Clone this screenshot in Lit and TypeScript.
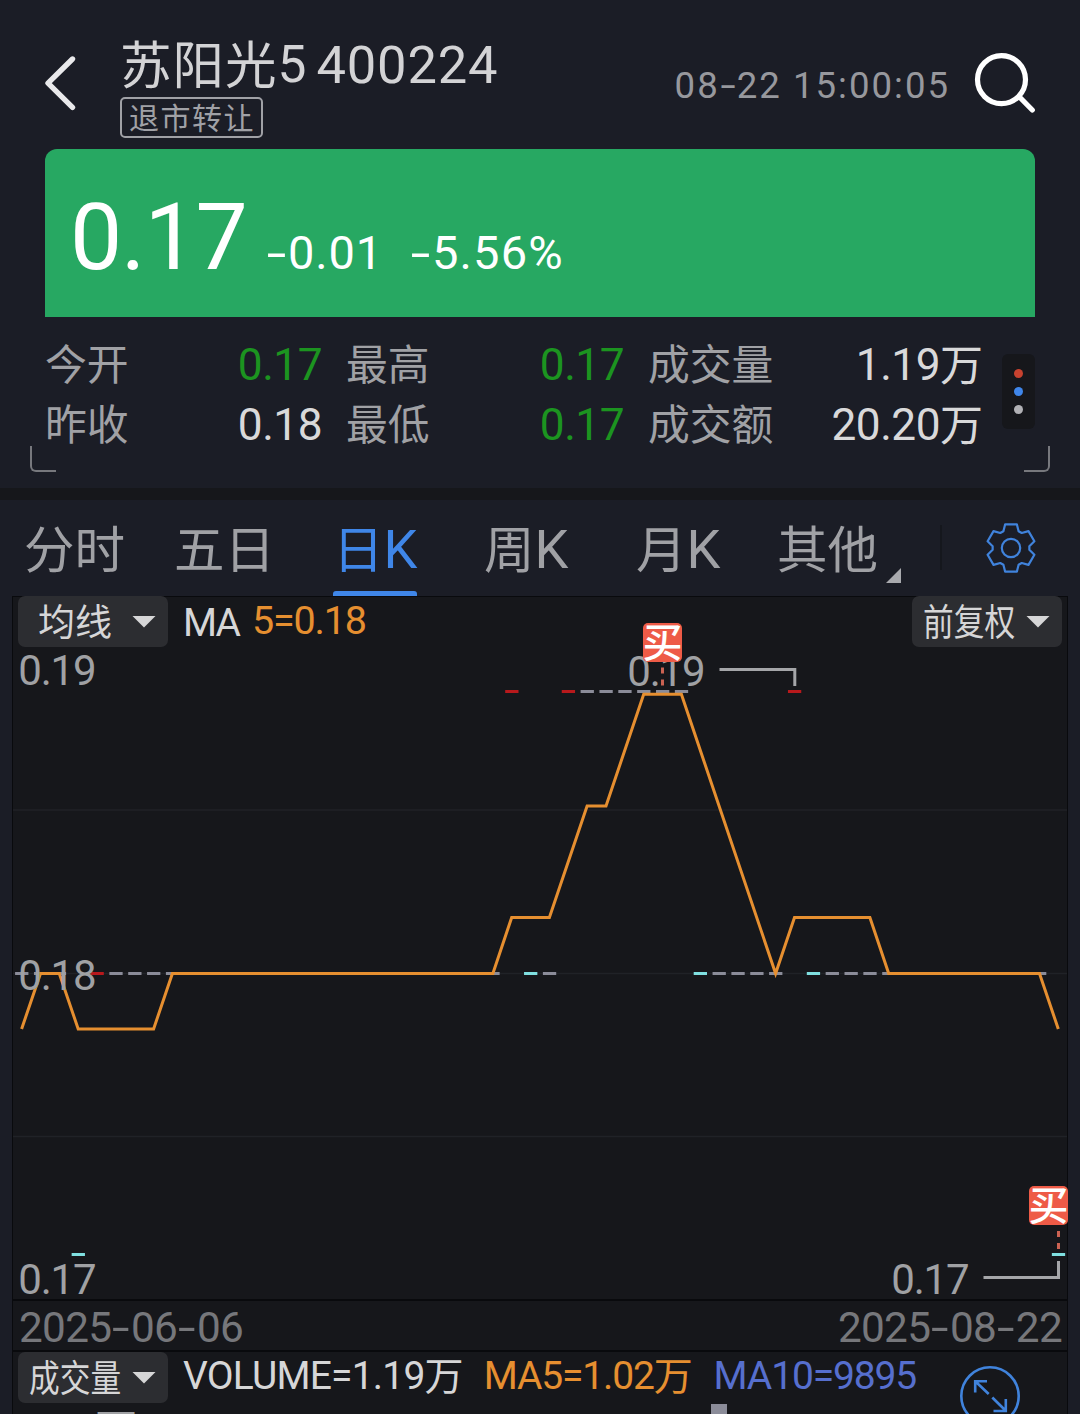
import { LitElement, html, svg, css } from "lit";
import { customElement } from "lit/decorators.js";
import { classMap } from "lit/directives/class-map.js";

type Tone = "up" | "flat" | "down";

interface Stat {
  label: string;
  value: string;
  green?: boolean;
}

const STATS: Stat[] = [
  { label: "今开", value: "0.17", green: true },
  { label: "最高", value: "0.17", green: true },
  { label: "成交量", value: "1.19万" },
  { label: "昨收", value: "0.18" },
  { label: "最低", value: "0.17", green: true },
  { label: "成交额", value: "20.20万" },
];

const TABS = ["分时", "五日", "日K", "周K", "月K", "其他"];

// Chart geometry: one trading day per step.
const STEP = 18.85;
const dayX = (i: number) => 21.6 + STEP * i;

const Y19 = 691.5;
const Y18 = 973.5;
const Y17 = 1254.5;

// Average line as [day, y].
const MA5: [number, number][] = [
  [0, 1029], [1, 973.5], [2, 973.5], [3, 1029], [7, 1029], [8, 973.5],
  [25, 973.5], [26, 917.5], [28, 917.5], [30, 806], [31, 806], [33, 694.3],
  [35, 694.3], [40, 973.5], [41, 917.5], [45, 917.5], [46, 973.5],
  [54, 973.5], [55, 1029],
];

const range = (a: number, b: number) => Array.from({ length: b - a + 1 }, (_, k) => a + k);

const CANDLES: { day: number; y: number; tone: Tone }[] = [
  ...[...range(0, 2), ...range(5, 25), 28, ...range(37, 40), ...range(43, 54)].map((day) => ({
    day, y: Y18, tone: "flat" as Tone,
  })),
  ...range(30, 35).map((day) => ({ day, y: Y19, tone: "flat" as Tone })),
  ...[26, 29, 41].map((day) => ({ day, y: Y19, tone: "up" as Tone })),
  { day: 4, y: Y18, tone: "up" },
  ...[27, 36, 42].map((day) => ({ day, y: Y18, tone: "down" as Tone })),
  ...[3, 55].map((day) => ({ day, y: Y17, tone: "down" as Tone })),
];

// Six-toothed gear outline around the origin.
const gearPath = (() => {
  const tooth = [[-7.6, -16.8], [-5.9, -23.6], [5.9, -23.6], [7.6, -16.8]];
  const pts: string[] = [];
  for (let k = 0; k < 6; k++) {
    const a = (k * Math.PI) / 3;
    for (const [x, y] of tooth) {
      pts.push(
        `${(x * Math.cos(a) - y * Math.sin(a)).toFixed(2)} ${(x * Math.sin(a) + y * Math.cos(a)).toFixed(2)}`
      );
    }
  }
  return `M${pts.join("L")}Z`;
})();

const FONT = css`Roboto, "Noto Sans CJK SC", sans-serif`;

// Figures use a wide hyphen; it is stretched in its own span.
const hyphenStyles = css`
  .hy { display: inline-block; transform: scaleX(1.5); margin: 0 0.095em; letter-spacing: 0; }
`;
const figures = (text: string) =>
  text.split(/(-)/).map((p) => (p === "-" ? html`<span class="hy">-</span>` : p));

@customElement("quote-header")
export class QuoteHeader extends LitElement {
  static styles = [
    hyphenStyles,
    css`
    :host { display: block; font-family: ${FONT}; }
    .bar { height: 149px; display: flex; align-items: flex-start; box-sizing: border-box; padding: 0 44px 0 44px; }
    .back { width: 34px; height: 60px; margin-top: 53px; flex: none; }
    .name { margin: 38px 0 0 42px; display: flex; flex-direction: column; align-items: flex-start; }
    .title { display: flex; gap: 9px; height: 54px; line-height: 54px; color: #d3d3d5; white-space: nowrap; font-size: 52.5px; }
    .cn { font-size: 51.5px; letter-spacing: 1px; }
    .han { vertical-align: -1.5px; line-height: 0; }
    .code { letter-spacing: 0.8px; }
    .tag { margin-top: 5px; height: 41px; width: 143px; box-sizing: border-box; border: 2px solid #a0a1a6; border-radius: 5px; color: #a0a1a6; font-size: 30px; letter-spacing: 1.5px; line-height: 39px; padding-left: 7px; white-space: nowrap; }
    .time { margin: 66px 24px 0 auto; height: 40px; line-height: 40px; font-size: 36.6px; letter-spacing: 2px; color: #97989d; white-space: nowrap; }
    .search { width: 64px; height: 64px; margin: 51px -2px 0 0; flex: none; }
    .banner { margin: 0 45px; height: 168px; box-sizing: border-box; border-radius: 12px 12px 0 0; background: #27a862; color: #fff; display: flex; align-items: baseline; padding: 39px 0 0 25px; white-space: nowrap; }
    .price { font-size: 93px; line-height: 100px; letter-spacing: -1.2px; width: 176px; }
    .delta { font-size: 47px; line-height: 100px; margin-left: 20px; letter-spacing: 0.9px; width: 115px; }
    .pct { margin-left: 29px; letter-spacing: 1.2px; }
  `,
  ];
  render() {
    return html`
      <div class="bar">
        <svg class="back" viewBox="44 53 34 60" fill="none" stroke="#e9e9eb" stroke-width="5.4" stroke-linecap="round" stroke-linejoin="round">
          <path d="M72.5 59 48 83.2 72.5 107.3" />
        </svg>
        <div class="name">
          <div class="title"><span class="cn"><span class="han">苏阳光</span>5</span><span class="code">400224</span></div>
          <div class="tag">退市转让</div>
        </div>
        <div class="time">${figures("08-22 15:00:05")}</div>
        <svg class="search" viewBox="974 51 64 64" fill="none" stroke="#fff" stroke-width="5.2" stroke-linecap="round">
          <circle cx="1001.5" cy="79.6" r="24" />
          <path d="M1019.5 97 1032.3 110" />
        </svg>
      </div>
      <div class="banner">
        <span class="price">0.17</span>
        <span class="delta">${figures("-0.01")}</span>
        <span class="delta pct">${figures("-5.56%")}</span>
      </div>
    `;
  }
}

@customElement("quote-stats")
export class QuoteStats extends LitElement {
  static styles = css`
    :host { display: block; font-family: ${FONT}; height: 171px; position: relative; }
    .row { display: flex; padding: 18px 45px 0 45px; }
    .grid { display: grid; grid-template-columns: 277px 279px 335px; column-gap: 23px; grid-auto-rows: 60px; flex: none; }
    .cell { display: flex; justify-content: space-between; line-height: 60px; white-space: nowrap; }
    .label { font-size: 41.8px; color: #a0a1a5; padding: 1px 0 0 0; }
    .value { font-size: 44.2px; letter-spacing: -0.5px; color: #d9d9da; }
    .green { color: #1c9420; }
    .wan { font-size: 43px; vertical-align: -1px; line-height: 0; letter-spacing: -1px; }
    .cell:nth-child(3n + 2) .label, .cell:nth-child(3n) .label { padding-left: 1px; }
    .dots { margin: 19px 0 0 auto; width: 33px; height: 75px; box-sizing: border-box; border-radius: 6px; background: #16171b; display: flex; flex-direction: column; align-items: center; justify-content: center; gap: 9px; flex: none; }
    .dot { width: 9px; height: 9px; border-radius: 50%; }
    .red { background: #c7422f; }
    .blue { background: #3f86ea; }
    .grey { background: #b1b1b5; }
    .corner { position: absolute; top: 129px; width: 24px; height: 24px; border-bottom: 2px solid #77787d; }
    .left { left: 30px; border-left: 2px solid #77787d; border-bottom-left-radius: 6px; }
    .right { right: 30px; border-right: 2px solid #77787d; border-bottom-right-radius: 6px; }
  `;
  render() {
    return html`
      <div class="row">
        <div class="grid">
          ${STATS.map(
            (s) => html`<div class="cell">
              <span class="label">${s.label}</span>
              <span class=${classMap({ value: true, green: !!s.green })}>${s.value.replace("万", "")}${
                s.value.endsWith("万") ? html`<span class="wan">万</span>` : ""
              }</span>
            </div>`
          )}
        </div>
        <div class="dots">
          <span class="dot red"></span><span class="dot blue"></span><span class="dot grey"></span>
        </div>
      </div>
      <span class="corner left"></span><span class="corner right"></span>
    `;
  }
}

@customElement("period-tabs")
export class PeriodTabs extends LitElement {
  static styles = css`
    :host { display: block; font-family: ${FONT}; border-top: 12px solid #16171b; }
    .tabs { height: 96px; display: grid; grid-template-columns: 150px 159px 151px 152px 141px 165px 1fr; padding-left: 24px; }
    .tab { display: flex; flex-direction: column; justify-content: space-between; align-items: flex-start; font-size: 50.5px; line-height: 101px; color: #a0a1a5; white-space: nowrap; position: relative; }
    .text { height: 90px; }
    .k { font-size: 54px; line-height: 0; vertical-align: 0.5px; }
    .active { color: #3f86e8; }
    .line { width: 84px; height: 5px; border-radius: 3px 3px 0 0; background: #3f86e8; }
    .more { position: absolute; left: 109px; top: 68px; width: 15px; height: 15px; background: #a9aaae; clip-path: polygon(100% 0, 100% 100%, 0 100%); }
    .settings { display: flex; align-items: flex-start; }
    .rule { width: 2px; height: 45px; margin: 25px 43px 0 -2px; background: #15171d; }
    .gear { width: 52px; height: 52px; margin-top: 22px; }
  `;
  render() {
    return html`
      <div class="tabs">
        ${TABS.map(
          (t) => html`<div class=${classMap({ tab: true, active: t === "日K" })}>
            <span class="text">${t.replace("K", "")}${t.endsWith("K") ? html`<span class="k">K</span>` : ""}</span>
            ${t === "日K" ? html`<span class="line"></span>` : ""}
            ${t === "其他" ? html`<span class="more"></span>` : ""}
          </div>`
        )}
        <div class="settings">
          <span class="rule"></span>
          <svg class="gear" viewBox="-26 -26 52 52" fill="none" stroke="#4083dc" stroke-width="2.2" stroke-linejoin="round">
            <path d=${gearPath} />
            <circle r="9.2" />
          </svg>
        </div>
      </div>
    `;
  }
}

@customElement("k-chart")
export class KChart extends LitElement {
  static styles = [
    hyphenStyles,
    css`
    :host { display: block; font-family: ${FONT}; margin: 0 12px; background: #16171b; box-shadow: inset 1px 0 #090a0d, inset -1px 0 #090a0d, inset 0 1px #090a0d; }
    .stack { display: grid; height: 703px; }
    .plot { grid-area: 1 / 1; display: block; width: 1056px; height: 703px; font-family: inherit; overflow: visible; }
    .tools { grid-area: 1 / 1; display: flex; height: 51px; padding: 0 6px; white-space: nowrap; }
    .btn { width: 150px; height: 51px; box-sizing: border-box; border-radius: 7px; background: #2c2d31; color: #d6d6d7; display: flex; align-items: center; justify-content: space-between; padding: 0 12px 0 20px; font-size: 37px; line-height: 51px; letter-spacing: 0; flex: none; }
    .name { padding-top: 4px; }
    .tight { padding-left: 11px; }
    .narrow { display: block; width: 93px; padding-top: 4px; }
    .narrow > span { display: inline-block; transform: scaleX(0.83); transform-origin: 0 50%; }
    .caret { width: 24px; height: 12px; background: #d6d6d7; clip-path: polygon(0 0, 100% 0, 50% 100%); }
    .ma { margin-left: 15px; line-height: 54px; font-size: 39px; letter-spacing: -1.9px; color: #d6d6d7; }
    .ma5 { margin-left: 13px; line-height: 50px; font-size: 39.5px; letter-spacing: -1.2px; color: #e68f30; }
    .push { margin-left: auto; }
    .grid { stroke: #202227; stroke-width: 1.5; }
    .avg { fill: none; stroke: #e68f30; stroke-width: 3; }
    .up { fill: #b8191c; }
    .flat { fill: #8b8c99; }
    .down { fill: #7fdfe0; }
    .axis { fill: #a0a1a4; font-size: 42px; }
    .leader { fill: none; stroke: #a5a6a9; stroke-width: 3; }
    .stem { stroke: #cb6252; stroke-width: 3; stroke-dasharray: 6 6; }
    .badge { fill: #ee5b47; }
    .buy { fill: #fff; font-size: 40px; font-weight: 500; text-anchor: middle; font-family: "Noto Sans CJK SC", sans-serif; }
    .dates { border-top: 2px solid #090a0d; border-bottom: 2px solid #090a0d; box-sizing: border-box; height: 53px; display: flex; justify-content: space-between; padding: 0 6px 0 7px; font-size: 42.3px; letter-spacing: -0.7px; line-height: 54px; color: #76777b; }
    .volume { height: 62px; overflow: hidden; position: relative; }
    .vol { color: #d6d6d7; margin-left: 15px; letter-spacing: -0.8px; }
    .legend { font-size: 39px; line-height: 48px; letter-spacing: -1.15px; }
    .v5 { color: #e68f30; margin-left: 21px; }
    .v10 { color: #566fce; margin-left: 22px; }
    .wan { vertical-align: -1px; line-height: 0; }
    .scale { padding-left: 6px; font-size: 42px; line-height: 50px; letter-spacing: -1.2px; color: #a0a1a4; margin-top: 2px; }
    .column { position: absolute; left: 699px; top: 52px; width: 16px; height: 10px; background: #8b8c99; }
    .expand { position: absolute; left: 946px; top: 12px; width: 64px; height: 50px; }
  `,
  ];

  private badge(x: number, y: number, stemX: number, stemY: number) {
    return svg`
      <path class="stem" d="M${stemX} ${stemY}v19" />
      <rect class="badge" x=${x} y=${y} width="39" height="39" rx="5" />
      <text class="buy" x=${x + 19.5} y=${y + 34}>买</text>
    `;
  }

  private label(x: number, y: number, text: string) {
    return svg`<text class="axis" x=${x} y=${y} textLength="78.5">${text}</text>`;
  }

  render() {
    const line = MA5.map(([d, y]) => `${dayX(d).toFixed(1)},${y}`).join(" ");
    return html`
      <div class="stack">
        <svg class="plot" viewBox="12 596 1056 703">
          ${[810, 973.5, 1136.5].map((y) => svg`<path class="grid" d="M13 ${y}H1067" />`)}
          ${CANDLES.map(
            (c) => svg`<rect class=${c.tone} x=${dayX(c.day) - 6.5} y=${c.y - 1.5} width="13.3" height="3" />`
          )}
          <polyline class="avg" points=${line} />
          ${this.label(18.2, 685, "0.19")}
          ${this.label(18.2, 989.7, "0.18")}
          ${this.label(18.2, 1294, "0.17")}
          ${this.label(627.2, 686, "0.19")}
          ${this.label(891.2, 1294, "0.17")}
          <path class="leader" d="M719.5 669.5H794.8V686" />
          <path class="leader" d="M983.5 1277.5H1058.5V1261" />
          ${this.badge(643, 623, 662.5, 667.5)}
          ${this.badge(1029, 1186, 1058.5, 1231)}
        </svg>
        <div class="tools">
          <div class="btn"><span class="name">均线</span><span class="caret"></span></div>
          <span class="ma">MA</span><span class="ma5">5=0.18</span>
          <div class="btn tight push"><span class="narrow"><span>前复权</span></span><span class="caret"></span></div>
        </div>
      </div>
      <div class="dates"><span>${figures("2025-06-06")}</span><span>${figures("2025-08-22")}</span></div>
      <div class="volume">
        <div class="tools legend">
          <div class="btn tight"><span class="narrow"><span>成交量</span></span><span class="caret"></span></div>
          <span class="vol">VOLUME=1.19<span class="wan">万</span></span>
          <span class="v5">MA5=1.02<span class="wan">万</span></span>
          <span class="v10">MA10=9895</span>
        </div>
        <div class="scale">0.14万</div>
        <span class="column"></span>
        <svg class="expand" viewBox="958 1364 64 50" fill="none" stroke="#4083dc" stroke-width="2.6">
          <circle cx="990" cy="1396" r="28.7" />
          <path d="M988.7 1394 975.5 1381.5M975.2 1392.5V1381.3H987M992.3 1397.5 1005.5 1410.5M1005.8 1399V1411H993.5" />
        </svg>
      </div>
    `;
  }
}

@customElement("app-root")
export class AppRoot extends LitElement {
  static styles = css`
    :host { display: block; width: 1080px; height: 1414px; overflow: hidden; background: #1b1d26; }
  `;
  render() {
    return html`
      <quote-header></quote-header>
      <quote-stats></quote-stats>
      <period-tabs></period-tabs>
      <k-chart></k-chart>
    `;
  }
}
